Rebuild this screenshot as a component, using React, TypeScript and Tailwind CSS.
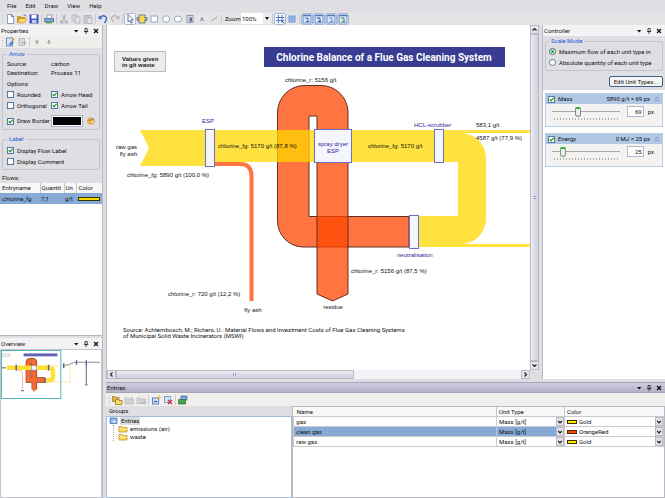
import React, { useState } from 'react'

const GOLD = '#ffd700'
const ORANGE_RED = '#ff4500'

const MENUS = ['File', 'Edit', 'Draw', 'View', 'Help']

type IconProps = { children: React.ReactNode }

function Icon({ children }: IconProps) {
  return (
    <svg viewBox="0 0 12 12" className="size-3 shrink-0" fill="none" aria-hidden="true">
      {children}
    </svg>
  )
}

type ToolProps = {
  label: string
  active?: boolean
  children: React.ReactNode
}

function Tool({ label, active, children }: ToolProps) {
  return (
    <button
      type="button"
      aria-label={label}
      className={
        active
          ? 'size-3 shrink-0 rounded-xs bg-[#f4f7fc] outline outline-[#a9b9d4] -outline-offset-1'
          : 'size-3 shrink-0 rounded-xs'
      }
    >
      <Icon>{children}</Icon>
    </button>
  )
}

function Grip() {
  return (
    <svg viewBox="0 0 4 12" className="h-3 w-1 shrink-0" aria-hidden="true">
      <path d="M2.5 1.5v10" stroke="#b4b4bc" strokeWidth="1" strokeDasharray="1 1.5" />
    </svg>
  )
}

function Separator() {
  return <span className="mx-px h-2.5 w-px shrink-0 bg-[#cbcbd0]" />
}

function LayoutGlyph({ accent }: { accent: string }) {
  return (
    <>
      <rect x="2" y="2" width="8" height="8" fill="#dbe7fa" stroke="#4d74b8" strokeWidth="0.8" />
      <path d="M2 2.6h8" stroke="#4d74b8" strokeWidth="1.2" />
      <path d="M4 5h3v3M8 8.5H5" stroke={accent} strokeWidth="1" />
    </>
  )
}

function MainToolbar() {
  return (
    <div className="flex h-[13px] items-center bg-[#e4e4e6]">
      <Grip />
      <Tool label="New">
        <path d="M3.5 1.5h4l2 2v7h-6z" fill="#fff" stroke="#6c87b8" strokeWidth="0.8" />
        <path d="M7.5 1.5v2h2" stroke="#3f62a0" strokeWidth="0.8" />
      </Tool>
      <Tool label="Open">
        <path d="M1.5 9.5v-6h3l1 1h3v1" fill="#e2a521" stroke="#b57f10" strokeWidth="0.7" />
        <path d="M1.5 9.8l2-4.3h7.2l-2 4.3z" fill="#ffd866" stroke="#c58d12" strokeWidth="0.7" />
        <path d="M7.5 2.3q2-1 2.8 1.2" stroke="#4666a8" strokeWidth="0.8" />
      </Tool>
      <Tool label="Save">
        <rect x="2" y="2" width="8" height="8" fill="#4a5fd8" stroke="#2b3ba8" strokeWidth="0.8" />
        <rect x="3.5" y="2" width="5" height="3.5" fill="#fff" />
        <rect x="4" y="7" width="4.5" height="3" fill="#c6cdf2" />
      </Tool>
      <Separator />
      <Tool label="Print">
        <path d="M4 5V2h5l-.5 3" fill="#fff" stroke="#6f86b0" strokeWidth="0.7" />
        <path d="M1.5 5.5h9v3.5h-9z" fill="#7fa6cf" stroke="#3c5e92" strokeWidth="0.7" />
        <path d="M3 9h5.5v1.5H3z" fill="#4fae48" />
      </Tool>
      <Separator />
      <Tool label="Cut">
        <path d="M4 1.5l3.5 6M8 1.5l-3.5 6" stroke="#a4a4ac" strokeWidth="1" />
        <circle cx="3.8" cy="9" r="1.3" stroke="#a4a4ac" />
        <circle cx="8.2" cy="9" r="1.3" stroke="#a4a4ac" />
      </Tool>
      <Tool label="Copy">
        <rect x="2" y="2" width="5" height="6" fill="#ddd" stroke="#b0b0b8" strokeWidth="0.8" />
        <rect x="5" y="4" width="5" height="6" fill="#e4e4e4" stroke="#b0b0b8" strokeWidth="0.8" />
      </Tool>
      <Tool label="Paste">
        <rect x="2" y="2.5" width="7" height="7.5" fill="#c8c8cc" stroke="#b0b0b8" strokeWidth="0.8" />
        <rect x="5" y="5" width="5" height="5.5" fill="#e4e4e4" stroke="#b0b0b8" strokeWidth="0.8" />
      </Tool>
      <Separator />
      <Tool label="Undo">
        <path d="M3 4.5q3-3 5.5-1t-1 6.5" stroke="#3d6cc9" strokeWidth="1.5" />
        <path d="M1.5 2.5l.3 4 3.8-1z" fill="#3d6cc9" />
      </Tool>
      <Tool label="Redo">
        <path d="M9 4.5q-3-3-5.5-1t1 5.500" stroke="#b2b2b8" strokeWidth="1.2" />
        <path d="M10.5 2.5l-.3 4-3.8-1z" fill="#b2b2b8" />
      </Tool>
      <Separator />
      <Tool label="Select" active>
        <path
          d="M4 1.5v7.5l1.8-1.7 1.2 2.9 1.2-.5-1.2-2.8h2.4z"
          fill="#fff"
          stroke="#4a5c86"
          strokeWidth="0.8"
        />
      </Tool>
      <Tool label="Process">
        <path d="M1 4.500h10v3H1z" fill="#f2c230" stroke="#38539a" strokeWidth="0.7" />
        <rect x="3" y="2" width="6" height="8" fill="#ffd94d" stroke="#5a76b8" strokeWidth="0.9" />
      </Tool>
      <Tool label="Rectangle">
        <rect x="3" y="3" width="6.5" height="6" fill="#fdfdff" stroke="#93a2c0" strokeWidth="0.9" />
      </Tool>
      <Tool label="Rounded rectangle">
        <rect x="3" y="3" width="6.5" height="6" rx="2" fill="#fdfdff" stroke="#93a2c0" strokeWidth="0.9" />
      </Tool>
      <Tool label="Ellipse">
        <ellipse cx="6" cy="6" rx="3.7" ry="3" fill="#fdfdff" stroke="#93a2c0" strokeWidth="0.9" />
      </Tool>
      <Tool label="Image">
        <rect x="3" y="2.5" width="6" height="7" fill="#d5dae4" stroke="#7e8aa4" strokeWidth="0.8" />
        <path d="M5.5 4.5h2.5v4h-2.5z" fill="#5d6c8c" />
      </Tool>
      <Tool label="Text">
        <rect x="3" y="3" width="6" height="6" fill="#ededf1" />
        <path d="M4 8.5l2-4.5 2 4.500M4.700 7h2.6" stroke="#848a98" strokeWidth="0.9" />
      </Tool>
      <Tool label="Line">
        <path d="M3 8.5l6-4.5" stroke="#8a8e9a" strokeWidth="0.9" />
      </Tool>
      <Separator />
      <label htmlFor="zoom" className="ml-0.5 w-4">
        Zoom
      </label>
      <div className="relative flex h-[11px] w-[30px] bg-white">
        <select id="zoom" className="w-full appearance-none bg-transparent px-px outline-none" defaultValue="100%">
          <option>50%</option>
          <option>100%</option>
          <option>200%</option>
        </select>
        <span className="pointer-events-none absolute inset-y-0 right-0 flex w-2 items-center justify-center bg-[#ececee]">
          <svg viewBox="0 0 4 3" className="h-[3px] w-1" aria-hidden="true">
            <path d="M0 0h4L2 3z" fill="#111" />
          </svg>
        </span>
      </div>
      <Separator />
      <Tool label="Snap to grid" active>
        <path d="M4.5 2v8M8 2v8M2 4.5h8.5M2 7.5h8.5" stroke="#4773b8" strokeWidth="0.9" />
        <path d="M8 8l2.5 2.5" stroke="#39508a" />
      </Tool>
      <Tool label="Show grid">
        <rect x="2.5" y="2.5" width="7" height="7" fill="#7397cf" />
        <path d="M4.8 2.5v7M7.2 2.5v7M2.5 4.8h7M2.5 7.2h7" stroke="#b9cdec" strokeWidth="0.6" />
      </Tool>
      <Separator />
      <Tool label="Properties window" active>
        <LayoutGlyph accent="#3f6fc4" />
      </Tool>
      <Tool label="Overview window" active>
        <LayoutGlyph accent="#28509a" />
      </Tool>
      <Tool label="Entries window" active>
        <LayoutGlyph accent="#6c8ed0" />
      </Tool>
      <Tool label="Controller window" active>
        <LayoutGlyph accent="#2f9a3c" />
      </Tool>
    </div>
  )
}

type DockHeaderProps = { title: string; focused?: boolean }

function DockHeader({ title, focused }: DockHeaderProps) {
  return (
    <header
      className={
        focused
          ? 'flex h-[11px] shrink-0 items-center justify-between border-y border-[#a5a3b8] bg-linear-to-b from-[#cfcddd] to-[#b3b0c9] pr-0.5 pl-px'
          : 'flex h-[11px] shrink-0 items-center justify-between bg-[#f3f3f5] pr-0.5 pl-px'
      }
    >
      <h2>{title}</h2>
      <div className="flex gap-0.5">
        <button type="button" aria-label={`${title} options`} className="size-2">
          <svg viewBox="0 0 8 8" className="size-2">
            <path d="M2 3h4.4L4.2 5.5z" fill="#111" />
          </svg>
        </button>
        <button type="button" aria-label={`Pin ${title}`} className="size-2">
          <svg viewBox="0 0 8 8" className="size-2" fill="none" stroke="#222" strokeWidth="0.8">
            <path d="M3 1.5h2.2v3H3zM2 4.6h4.3M4.1 4.6v2.5" />
          </svg>
        </button>
        <button type="button" aria-label={`Close ${title}`} className="size-2">
          <svg viewBox="0 0 8 8" className="size-2" stroke="#111" strokeWidth="1.3">
            <path d="M2 2l4 4M6 2L2 6" />
          </svg>
        </button>
      </div>
    </header>
  )
}

type CheckProps = { label: string; checked?: boolean }

function Check({ label, checked }: CheckProps) {
  return (
    <label className="flex items-center gap-[3px]">
      <span className="relative flex size-[7px] shrink-0">
        <input
          type="checkbox"
          defaultChecked={checked}
          className="peer size-[7px] appearance-none border border-[#54799f] bg-[#fbfbfb]"
        />
        <svg
          viewBox="0 0 7 7"
          className="pointer-events-none absolute inset-0 hidden size-[7px] peer-checked:block"
          fill="none"
          stroke="#21a121"
          strokeWidth="1.3"
        >
          <path d="M1.7 3.3l1.4 1.5 2.4-2.9" />
        </svg>
      </span>
      <span className="whitespace-nowrap">{label}</span>
    </label>
  )
}

function Swatch({ color }: { color: string }) {
  return <span className="block h-1 w-full border border-[#3a3200]" style={{ backgroundColor: color }} />
}

function PropertiesPanel() {
  return (
    <section className="flex min-h-0 flex-1 flex-col border-b border-[#b5b5bc]">
      <DockHeader title="Properties" />
      <div className="flex h-3 shrink-0 items-center bg-[#efeeeb]">
        <Grip />
        <Tool label="Categorized">
          <rect x="2.5" y="2" width="6" height="8" fill="#dbe5f7" stroke="#5577b5" strokeWidth="0.8" />
          <path d="M4.500 8.500l3.500-3.500 2 1.500-3.500 3z" fill="#4d80ce" />
          <path d="M8 2.5h2.5v2H8z" fill="#d99a3c" />
        </Tool>
        <Tool label="Copy properties">
          <rect x="3" y="2.5" width="5.5" height="7" fill="#dcdcdc" stroke="#a4a4aa" strokeWidth="0.7" />
          <path d="M5 7h5M8.5 5.5L10 7 8.5 8.5" stroke="#9a9aa0" strokeWidth="0.7" />
        </Tool>
        <Separator />
        <Tool label="Move up">
          <path d="M6 3.5l2.5 2.5H7v2H5V6H3.5z" fill="#b0b0b6" />
        </Tool>
        <Tool label="Move down">
          <path d="M6 8.5L3.5 6H5V4h2v2h1.5z" fill="#b0b0b6" />
        </Tool>
      </div>
      <div className="px-0.5 pt-px">
        <fieldset className="rounded-xs border border-[#c4c4cc] px-1 pb-0.5">
          <legend className="px-0.5 text-[#2456d6]">Arrow</legend>
          <dl className="grid grid-cols-2 leading-[9px]">
            <dt>Source:</dt>
            <dd>carbon</dd>
            <dt>Destination:</dt>
            <dd>Process 11</dd>
          </dl>
          <p className="mt-0.5">Options:</p>
          <div className="grid grid-cols-2 leading-[11px]">
            <Check label="Rounded" />
            <Check label="Arrow Head" checked />
            <Check label="Orthogonal" />
            <Check label="Arrow Tail" checked />
          </div>
          <div className="mt-1 flex items-center justify-between">
            <Check label="Draw Border" checked />
            <div className="flex items-center gap-1">
              <span className="block h-3 w-8 border border-[#a8b4c4] bg-white p-px">
                <span className="block h-full w-full bg-black" />
              </span>
              <button type="button" aria-label="Pick border color" className="size-2">
                <svg viewBox="0 0 8 8" className="size-2">
                  <ellipse cx="4" cy="4" rx="3.6" ry="3.2" fill="#f0c04a" stroke="#b98a1e" strokeWidth="0.5" />
                  <circle cx="2.6" cy="3.2" r="0.8" fill="#d33a2c" />
                  <circle cx="5" cy="2.6" r="0.8" fill="#3a6fd0" />
                  <circle cx="5.4" cy="5" r="0.8" fill="#fff" />
                </svg>
              </button>
            </div>
          </div>
        </fieldset>
        <fieldset className="mt-1 rounded-xs border border-[#c4c4cc] px-1 pt-px pb-0.5 leading-[11px]">
          <legend className="px-0.5 leading-[10px] text-[#2456d6]">Label</legend>
          <Check label="Display Flow Label" checked />
          <Check label="Display Comment" />
        </fieldset>
        <p className="mt-0.5 leading-[11px]">Flows:</p>
      </div>
      <div className="flex-1 bg-white">
        <table className="w-full table-fixed border-collapse text-left">
          <thead>
            <tr className="h-[9px] bg-[#f7f7f7]">
              <th className="w-10 border-r border-[#c8c8c8] pl-0.5 font-normal">Entryname</th>
              <th className="w-6 overflow-hidden border-r border-[#c8c8c8] pl-px font-normal">Quantit</th>
              <th className="w-3 border-r border-[#c8c8c8] pl-px font-normal">Un</th>
              <th className="pl-0.5 font-normal">Color</th>
            </tr>
          </thead>
          <tbody>
            <tr className="h-[11px] bg-[#86aad6]">
              <td className="pl-0.5">chlorine_fg</td>
              <td className="pl-px">7,1</td>
              <td className="pl-px">g/t</td>
              <td className="px-0.5">
                <Swatch color={GOLD} />
              </td>
            </tr>
          </tbody>
        </table>
      </div>
    </section>
  )
}

function OverviewPanel() {
  return (
    <section className="flex h-40 shrink-0 flex-col">
      <DockHeader title="Overview" />
      <div className="flex-1 overflow-hidden border border-[#c4c4cc] bg-white">
        <svg viewBox="0 0 102 50" className="w-full" fill="none" role="img" aria-label="Diagram overview">
          <rect x="1" y="4" width="8" height="3" fill="#eee" stroke="#bbb" strokeWidth="0.5" />
          <rect x="23" y="3.500" width="34.5" height="3" fill="#5f66b5" />
          <path d="M45 30.5H28V12.500q0-1.500 3-1.500t3 1.500V40" stroke="#5a3018" strokeWidth="5.6" />
          <path d="M45 30.5H28V12.500q0-1.500 3-1.500t3 1.500V40" stroke="#f56a33" strokeWidth="4.6" />
          <path d="M31.500 40h5L34 42.500z" fill="#f56a33" />
          <path d="M6 18h43q4 0 4 4v5q0 4-5 4h-3" stroke="#ffe034" strokeWidth="4.6" />
          <path d="M50 16.200h20.500v16.500H50" stroke="#ffe68a" strokeWidth="0.8" />
          <path d="M16 20.500q6 0 6 4v15" stroke="#ff9e80" strokeWidth="0.8" />
          <path d="M1 18.200h4M20.500 41.500h3" stroke="#444" strokeWidth="0.9" />
          <rect x="31" y="16" width="5.5" height="4.5" fill="#f5f5ff" stroke="#7070b0" strokeWidth="0.5" />
          <path
            d="M15.500 15v6M48.500 15v6M45 28.500v5M64 13.500v5M77 10.500v4.500M87 10.500v5.500"
            stroke="#5555b0"
            strokeWidth="1.4"
          />
          <path d="M65 15.500q4 0 6.500-1.500t5.500-1.500h24" stroke="#8a8a92" strokeWidth="1" />
          <path d="M87 16v19M85.500 35.500h3" stroke="#444" strokeWidth="0.8" />
          <rect x="0.500" y="0.500" width="60.5" height="49" stroke="#52b5b5" strokeWidth="1" />
        </svg>
      </div>
    </section>
  )
}

function SankeyDiagram() {
  return (
    <svg
      width="423"
      height="344"
      viewBox="0 0 423 344"
      className="shrink-0"
      role="img"
      aria-label="Chlorine balance diagram"
    >
      <rect x="7.5" y="26.5" width="51" height="20" fill="#ebebeb" stroke="#bdbdbd" />
      <g fontSize="6" fontWeight="700" fill="#222">
        <text x="15" y="36">Values given</text>
        <text x="15" y="42">in g/t waste</text>
      </g>

      <rect x="157" y="22" width="241" height="20" fill="#383c92" />
      <text
        x="277"
        y="36"
        fontSize="10"
        fontWeight="700"
        fill="#fff"
        textAnchor="middle"
        className="font-['Roboto',sans-serif]"
      >
        Chlorine Balance of a Flue Gas Cleaning System
      </text>

      {/* recycled flow from the neutralisation back to the dryer, then the residue */}
      <g fill={ORANGE_RED} fillOpacity="0.75" stroke="#5a3325" strokeWidth="1">
        <path d="M302 222H196A26 26 0 0 1 170.5 196V87A27 27 0 0 1 197 60.5H214A27 27 0 0 1 241 87V110H210V91H202V191.5H302Z" />
        <path d="M210 136V269L225.5 276L241 269V136Z" />
      </g>
      <path
        d="M108 139H133Q144 139 144.5 150V276"
        fill="none"
        stroke={ORANGE_RED}
        strokeOpacity="0.75"
        strokeWidth="4"
      />

      <g fill={GOLD} fillOpacity="0.75">
        <path d="M33 105H98V141H33L42 123Z" />
        <path d="M108 105H207V137H108Z" />
        <path d="M244 105H327V137H244Z" />
        <path d="M336 105H423V108H336Z" />
        <path d="M336 108H354A25 25 0 0 1 379 133V194A25 25 0 0 1 354 219H311V191H351V137H336Z" />
        <path d="M311 219H423V222H311Z" />
      </g>

      <g fill="#f5f5fd" stroke="#6f70bd" strokeWidth="1">
        <rect x="98.5" y="104.5" width="9" height="37" />
        <rect x="207.5" y="104.5" width="37" height="33" />
        <rect x="327.5" y="104.5" width="9" height="33" />
        <rect x="302.5" y="190.5" width="9" height="33" />
      </g>

      <g fontSize="6" fill="#2c1c9c">
        <text x="95" y="98">ESP</text>
        <text x="226" y="121" textAnchor="middle">spray dryer</text>
        <text x="226" y="128" textAnchor="middle">ESP</text>
        <text x="307" y="102">HCL-scrubber</text>
        <text x="290" y="232">neutralisation</text>
      </g>

      <g fontSize="6" fill="#111">
        <text x="178" y="57">chlorine_r: 5156 g/t</text>
        <text x="111" y="123">chlorine_fg: 5170 g/t (87,8 %)</text>
        <text x="20" y="152">chlorine_fg: 5890 g/t (100,0 %)</text>
        <text x="261" y="123">chlorine_fg: 5170 g/t</text>
        <text x="369" y="102">583,1 g/t</text>
        <text x="369" y="115">4587 g/t (77,9 %)</text>
        <text x="244" y="248">chlorine_r: 5156 g/t (87,5 %)</text>
        <text x="61" y="271">chlorine_r: 720 g/t (12,2 %)</text>
        <text x="30" y="124" textAnchor="end">raw gas</text>
        <text x="30" y="131" textAnchor="end">fly ash</text>
        <text x="226" y="284" textAnchor="middle">residue</text>
        <text x="146" y="287" textAnchor="middle">fly ash</text>
      </g>

      <g fontSize="6" fill="#111" className="font-['Roboto',sans-serif]">
        <text x="16" y="307">
          Source: Achternbosch, M.; Richers, U.: Material Flows and Investment Costs of Flue Gas Cleaning Systems
        </text>
        <text x="16" y="313">of Municipal Solid Waste Incinerators (MSWI)</text>
      </g>
    </svg>
  )
}

type ScrollButtonProps = { label: string; d: string }

function ScrollButton({ label, d }: ScrollButtonProps) {
  return (
    <button type="button" aria-label={label} className="size-[9px] shrink-0 border border-[#b9b9c8] bg-[#e6e6ee]">
      <svg viewBox="0 0 7 7" className="size-[7px]" fill="none" stroke="#222" strokeWidth="1.2">
        <path d={d} />
      </svg>
    </button>
  )
}

function DiagramCanvas() {
  return (
    <main className="flex min-w-0 flex-1 flex-col border-l border-[#b9b9c0] bg-white">
      <div className="flex min-h-0 flex-1">
        <div className="min-w-0 flex-1 overflow-hidden bg-white font-['Liberation_Sans',sans-serif]">
          <SankeyDiagram />
        </div>
        <div className="flex w-[9px] shrink-0 flex-col bg-[#f1f1f6]">
          <ScrollButton label="Scroll up" d="M1.5 4.5l2-2 2 2" />
          <div className="flex flex-1 items-center justify-center border border-[#b9b9c8] bg-linear-to-r from-[#ececf3] to-[#cfcfde]">
            <span className="h-[3px] w-[3px] border-y border-[#a2a2b4]" />
          </div>
          <ScrollButton label="Scroll down" d="M1.5 2.5l2 2 2-2" />
        </div>
      </div>
      <div className="flex h-[9px] shrink-0 bg-[#f3f3f7]">
        <ScrollButton label="Scroll left" d="M4.5 1.5l-2 2 2 2" />
        <div className="flex w-[55%] items-center justify-center border border-[#b9b9c8] bg-linear-to-b from-[#ececf3] to-[#cfcfde]">
          <span className="h-[3px] w-[3px] border-x border-[#a2a2b4]" />
        </div>
        <span className="flex-1" />
        <ScrollButton label="Scroll right" d="M2.5 1.5l2 2-2 2" />
        <span className="w-[9px] shrink-0 bg-[#dedee3]" />
      </div>
    </main>
  )
}

type ScaleCardProps = { name: string; unit: string; initial: number }

function ScaleCard({ name, unit, initial }: ScaleCardProps) {
  const [px, setPx] = useState(initial)
  return (
    <div className="border border-[#b7cbe4] bg-[#f4f3f1]">
      <div className="flex h-[10px] items-center justify-between bg-[#b0c8e4] px-0.5">
        <Check label={name} checked />
        <span className="flex items-center gap-1">
          {unit} = {px} px
          <svg viewBox="0 0 6 6" className="size-1.5" fill="none" stroke="#6c88b4" strokeWidth="0.8">
            <path d="M1 3l2-2 2 2M1 5.5l2-2 2 2" />
          </svg>
        </span>
      </div>
      <div className="flex h-[22px] items-start justify-between pt-0.5 pr-2 pl-1.5">
        <div className="w-[68px]">
          <input
            type="range"
            min={0}
            max={190}
            value={px}
            aria-label={`${name} scale`}
            onChange={(e) => setPx(Number(e.target.value))}
            className="block h-[10px] w-full appearance-none bg-transparent [&::-webkit-slider-runnable-track]:h-px [&::-webkit-slider-runnable-track]:bg-[#a8a8a4] [&::-webkit-slider-thumb]:-mt-1 [&::-webkit-slider-thumb]:h-[10px] [&::-webkit-slider-thumb]:w-1.5 [&::-webkit-slider-thumb]:appearance-none [&::-webkit-slider-thumb]:rounded-t-xs [&::-webkit-slider-thumb]:rounded-b-sm [&::-webkit-slider-thumb]:border [&::-webkit-slider-thumb]:border-t-2 [&::-webkit-slider-thumb]:border-[#7d938a] [&::-webkit-slider-thumb]:border-t-[#2cb533] [&::-webkit-slider-thumb]:bg-[#e9efe9]"
          />
          <svg className="mt-0.5 h-0.5 w-full" aria-hidden="true">
            <path d="M2 1h64" stroke="#b0b0aa" strokeWidth="2" strokeDasharray="1 2" />
          </svg>
        </div>
        <label className="flex items-center gap-1">
          <input
            type="text"
            value={px}
            onChange={(e) => setPx(Number(e.target.value) || 0)}
            className="h-[11px] w-[17px] border border-[#a9bbcf] bg-white pr-px text-right outline-none"
          />
          px
        </label>
      </div>
    </div>
  )
}

function ControllerPanel() {
  return (
    <aside className="ml-[3px] flex w-[123px] shrink-0 flex-col border-l border-[#b9b9c0] bg-white">
      <DockHeader title="Controller" />
      <div className="bg-[#dedee3] px-0.5 pt-px pb-[3px]">
        <fieldset className="rounded-xs border border-[#c4c4cc] px-[3px] pt-px pb-0.5">
          <legend className="px-0.5 leading-2 text-[#2456d6]">Scale Mode</legend>
          {['Maximum flow of each unit type in', 'Absolute quantity of each unit type'].map((mode, i) => (
            <label key={mode} className="flex items-center gap-[3px] leading-[11px] whitespace-nowrap">
              <input
                type="radio"
                name="scale-mode"
                defaultChecked={i === 0}
                className="size-[7px] shrink-0 appearance-none rounded-full border border-[#54799f] bg-white checked:bg-[#2aa52a] checked:shadow-[inset_0_0_0_1px_#fff]"
              />
              {mode}
            </label>
          ))}
        </fieldset>
        <div className="mt-[5px] flex justify-end">
          <button type="button" className="h-[11px] rounded-xs border border-[#3d5f8c] bg-[#f4f4f2] px-1">
            Edit Unit Types...
          </button>
        </div>
      </div>
      <div className="flex flex-col gap-1.5 px-0.5 pt-[3px]">
        <ScaleCard name="Mass" unit="5890 g/t" initial={69} />
        <ScaleCard name="Energy" unit="0 MJ" initial={25} />
      </div>
    </aside>
  )
}

const ENTRY_ROWS = [
  { name: 'gas', color: 'Gold', hex: '#ffe000' },
  { name: 'clean gas', color: 'OrangeRed', hex: '#ff4500' },
  { name: 'raw gas', color: 'Gold', hex: '#ffe000' }
]

function DropArrow() {
  return (
    <span className="pointer-events-none absolute inset-y-0 right-0 flex w-2 items-center justify-center border border-[#b9b9c8] bg-[#e1e1ea]">
      <svg viewBox="0 0 6 6" className="size-1.5 shrink-0" fill="none" stroke="#222" strokeWidth="1.2">
        <path d="M1.2 2l1.8 1.8L4.8 2" />
      </svg>
    </span>
  )
}

function EntriesTable() {
  const [selected, setSelected] = useState('clean gas')
  return (
    <div className="flex-1 border border-[#b9b9c0] bg-white">
      <table className="w-full table-fixed border-collapse text-left leading-[9px]">
        <thead>
          <tr className="bg-[#f8f8f8]">
            <th className="pl-[3px] font-normal">Name</th>
            <th className="w-[68px] border-l border-[#c8c8c8] pl-0.5 font-normal">Unit Type</th>
            <th className="w-[99px] border-l border-[#c8c8c8] pl-0.5 font-normal">Color</th>
          </tr>
        </thead>
        <tbody>
          {ENTRY_ROWS.map((row) => (
            <tr
              key={row.name}
              onClick={() => setSelected(row.name)}
              className={
                row.name === selected ? 'border border-[#c9c9cf] bg-[#86aad6]' : 'border border-[#c9c9cf]'
              }
            >
              <td className="pl-0.5">{row.name}</td>
              <td className="border-l border-[#c9c9cf]">
                <div className="relative flex h-[9px]">
                  <select
                    aria-label={`Unit type of ${row.name}`}
                    className="w-full appearance-none bg-transparent pl-0.5 outline-none"
                  >
                    <option>Mass [g/t]</option>
                    <option>Energy [MJ]</option>
                  </select>
                  <DropArrow />
                </div>
              </td>
              <td className="border-l border-[#c9c9cf] bg-white">
                <div className="relative flex h-[9px] items-center pl-0.5">
                  <span className="w-[10px] shrink-0">
                    <Swatch color={row.hex} />
                  </span>
                  <select
                    aria-label={`Color of ${row.name}`}
                    defaultValue={row.color}
                    className="w-full appearance-none bg-transparent pl-0.5 outline-none"
                  >
                    <option>Gold</option>
                    <option>OrangeRed</option>
                  </select>
                  <DropArrow />
                </div>
              </td>
            </tr>
          ))}
        </tbody>
      </table>
    </div>
  )
}

function EntriesPanel() {
  return (
    <section className="mt-[3px] flex h-29 shrink-0 flex-col">
      <DockHeader title="Entries" focused />
      <div className="flex h-[13px] shrink-0 items-center bg-[#f0efec] pl-px">
        <Grip />
        <Tool label="New group">
          <path d="M1.5 2.5h2.5l1 1h3v4h-6.5z" fill="#e9b840" stroke="#8d6d1c" strokeWidth="0.7" />
          <path d="M4.5 5.5H7l1 1h3v4H4.5z" fill="#ffd96a" stroke="#8d6d1c" strokeWidth="0.7" />
        </Tool>
        <Tool label="Rename group">
          <path d="M2 4h3l1 1h4.5v5H2z" fill="#d4d4d6" stroke="#b4b4b8" strokeWidth="0.7" />
          <path d="M8.5 2.5v3" stroke="#bbb" />
        </Tool>
        <Tool label="Delete group">
          <path d="M2 4h3l1 1h4.5v4.5H2z" fill="#d4d4d6" stroke="#b4b4b8" strokeWidth="0.7" />
          <path d="M7 7.5l3 3M10 7.5l-3 3" stroke="#aaa" strokeWidth="0.8" />
        </Tool>
        <Separator />
        <Tool label="New entry">
          <rect x="2.5" y="4" width="6" height="6" fill="#d5e4fb" stroke="#3c69b8" strokeWidth="0.8" />
          <path d="M4 7.5h3" stroke="#2b54a0" strokeWidth="1.2" />
          <path d="M9 1.5v4M7 3.5h4" stroke="#f0b828" strokeWidth="1" />
        </Tool>
        <Tool label="Delete entry">
          <rect x="2.5" y="2.5" width="6" height="6" fill="#d5e4fb" stroke="#6d8cc4" strokeWidth="0.8" />
          <path d="M6 6l4 4M10 6l-4 4" stroke="#c8283c" strokeWidth="1.3" />
        </Tool>
        <Separator />
        <Tool label="Import entries">
          <rect x="4" y="2" width="6" height="4" fill="#7fa6e0" stroke="#3c5ea4" strokeWidth="0.7" />
          <path d="M1.5 5.5h7v4.5h-7z" fill="#4aa548" stroke="#2c7030" strokeWidth="0.7" />
        </Tool>
      </div>
      <div className="flex min-h-0 flex-1">
        <div className="flex w-1/3 flex-col">
          <h3 className="flex h-[10px] shrink-0 items-center bg-[#dedee3] pl-[3px]">Groups</h3>
          <ul className="flex-1 border border-[#a9bdd4] bg-white pl-0.5 leading-[8px]">
            <li>
              <span className="flex items-center gap-0.5">
                <svg viewBox="0 0 9 8" className="h-2 w-[9px]" aria-hidden="true">
                  <path d="M1 1h7v5.5H1z" fill="#8db4ee" stroke="#3b62ae" strokeWidth="0.7" />
                  <path d="M3 4.5h3.5M5 3l1.5 1.5L5 6" fill="none" stroke="#fff" strokeWidth="0.7" />
                </svg>
                <span className="bg-[#dcdce0] px-px">Entries</span>
              </span>
              <ul className="ml-1 border-l border-dotted border-[#a4a4a4] pl-1">
                {['emissions (air)', 'waste'].map((group) => (
                  <li key={group} className="flex items-center gap-0.5">
                    <svg viewBox="0 0 10 8" className="h-2 w-2.5" aria-hidden="true">
                      <path d="M1 1.5h3l1 1h4v4.5H1z" fill="#ffd85e" stroke="#b88a14" strokeWidth="0.7" />
                      <path d="M1.5 4h7" stroke="#fff0a8" strokeWidth="0.8" />
                    </svg>
                    {group}
                  </li>
                ))}
              </ul>
            </li>
          </ul>
        </div>
        <EntriesTable />
      </div>
    </section>
  )
}

export default function App() {
  return (
    <div className="flex h-screen flex-col overflow-hidden bg-[#dedee3] font-['Roboto',sans-serif] text-[6px] leading-[10px] text-[#111]">
      <nav className="flex h-3 shrink-0 items-center gap-[9px] pl-[7px]">
        {MENUS.map((menu) => (
          <button key={menu} type="button">
            {menu}
          </button>
        ))}
      </nav>
      <MainToolbar />
      <div className="flex min-h-0 flex-1">
        <aside className="flex w-[103px] shrink-0 flex-col gap-0.5 border-r border-[#b9b9c0]">
          <PropertiesPanel />
          <OverviewPanel />
        </aside>
        <div className="ml-[3px] flex min-w-0 flex-1 flex-col">
          <div className="flex min-h-0 flex-1">
            <DiagramCanvas />
            <ControllerPanel />
          </div>
          <EntriesPanel />
        </div>
      </div>
    </div>
  )
}
